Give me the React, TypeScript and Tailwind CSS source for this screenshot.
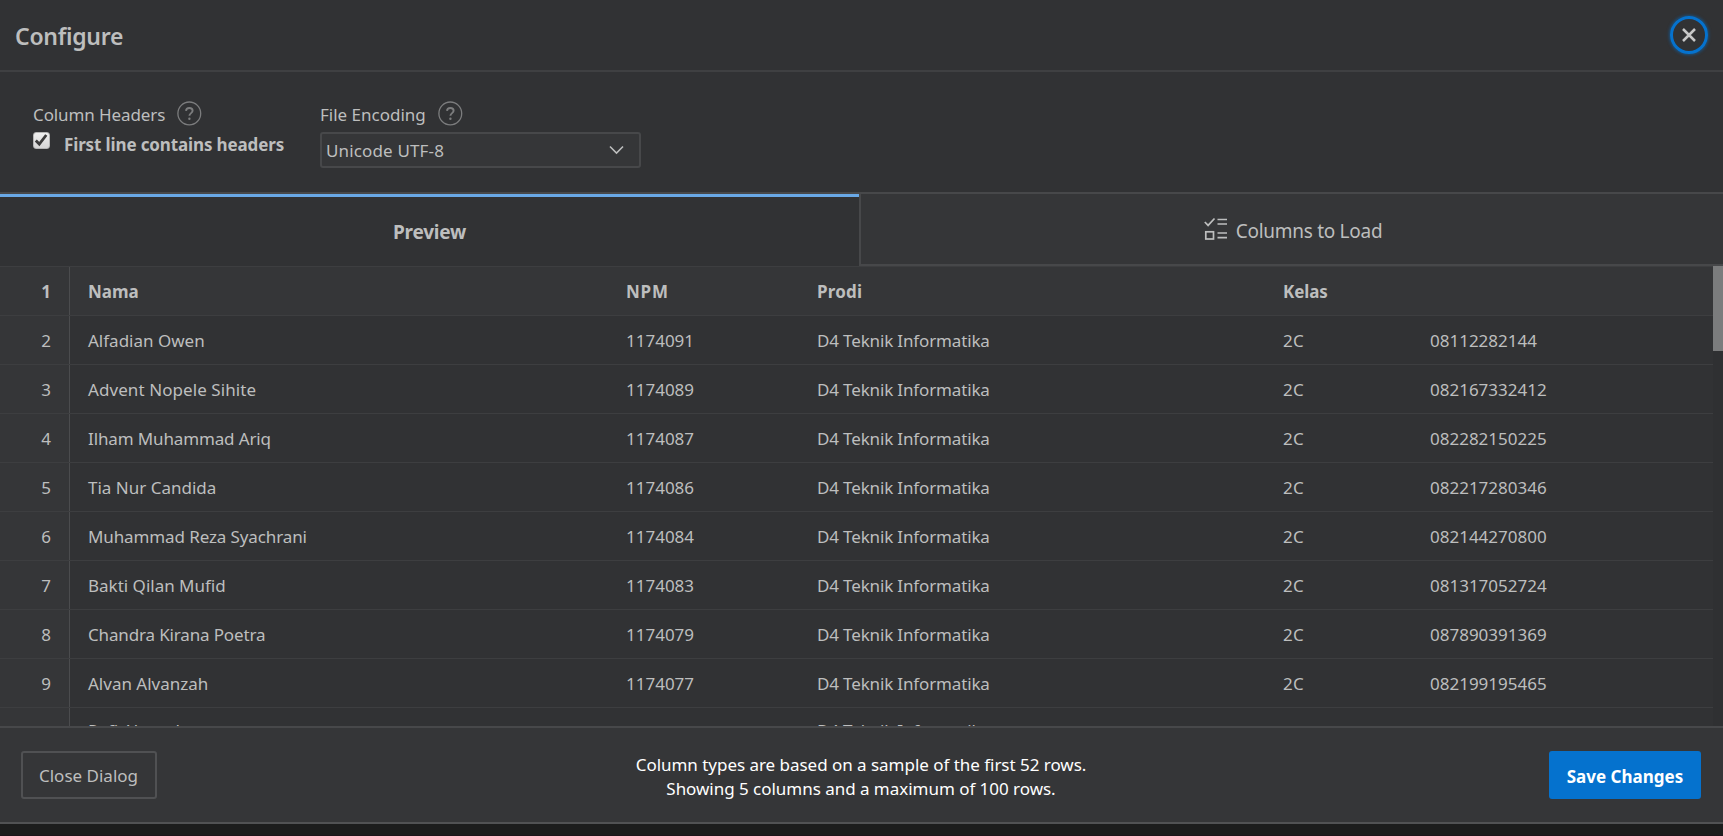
import React from "react";

type Row = { n: number; nama: string; track: string; npm: string; telp: string };

const rows: Row[] = [
  { n: 2, nama: "Alfadian Owen", track: "tracking-normal", npm: "1174091", telp: "08112282144" },
  { n: 3, nama: "Advent Nopele Sihite", track: "tracking-[0.08px]", npm: "1174089", telp: "082167332412" },
  { n: 4, nama: "Ilham Muhammad Ariq", track: "tracking-[-0.13px]", npm: "1174087", telp: "082282150225" },
  { n: 5, nama: "Tia Nur Candida", track: "tracking-normal", npm: "1174086", telp: "082217280346" },
  { n: 6, nama: "Muhammad Reza Syachrani", track: "tracking-[-0.11px]", npm: "1174084", telp: "082144270800" },
  { n: 7, nama: "Bakti Qilan Mufid", track: "tracking-normal", npm: "1174083", telp: "081317052724" },
  { n: 8, nama: "Chandra Kirana Poetra", track: "tracking-[-0.15px]", npm: "1174079", telp: "087890391369" },
  { n: 9, nama: "Alvan Alvanzah", track: "tracking-normal", npm: "1174077", telp: "082199195465" },
];

const grid = "grid h-[49px] shrink-0 grid-cols-[70px_556px_191px_466px_147px_1fr] border-t border-[#3d3e40]";

function Help() {
  return (
    <svg className="size-6 shrink-0 overflow-visible" viewBox="0 0 24 24" fill="none" stroke="#7c7d7e" strokeWidth="1.3">
      <circle cx="12.3" cy="12.4" r="11.4" />
      <path d="M9 9.900C9.100 8 10.400 7 12.300 7s3.300 1.100 3.300 2.800c0 2.300-3.200 2.400-3.200 5" strokeWidth="1.9" />
      <circle cx="12.4" cy="17.800" r="1.2" fill="#7c7d7e" stroke="none" />
    </svg>
  );
}

export default function App() {
  return (
    <div className="flex h-[836px] w-[1723px] flex-col overflow-hidden whitespace-nowrap bg-[#313234] font-['Noto_Sans',sans-serif] text-[17px] leading-6 text-[#bdbebe]">
      <header className="flex h-[72px] shrink-0 items-center justify-between border-b-2 border-[#3f4042] pl-[15px] pr-[15px]">
        <h1 className="pt-px text-[23px] font-semibold leading-8 tracking-[-0.28px]">Configure</h1>
        <button className="flex size-[38px] items-center justify-center rounded-full border-[3px] border-[#0572ce] shadow-[0_0_3px_1px_rgba(5,114,206,0.5)]">
          <svg className="size-4" viewBox="0 0 16 16" stroke="#c8c8c8" strokeWidth="2.5"><path d="M2 2l12 12M14 2L2 14" /></svg>
        </button>
      </header>

      <section className="flex h-[120px] shrink-0 pl-[33px] pt-[29px]">
        <div className="w-[287px]">
          <div className="flex h-6 items-center gap-3"><span className="w-[132px] pt-[4px] tracking-[-0.1px]">Column Headers</span><Help /></div>
          <div className="flex pt-[6px]">
            <span className="mt-[1px] flex size-[17px] items-center justify-center rounded-[3px] border border-[#b5b5b5] bg-linear-to-b from-[#efefef] to-[#d6d6d6]">
              <svg className="size-[15px]" viewBox="0 0 15 15" fill="none" stroke="#3c3c3c" strokeWidth="2.8"><path d="M1.800 7.500l3.500 3.600L12.300 2" /></svg>
            </span>
            <span className="ml-[14px] mt-[2px] font-bold tracking-[-0.13px]">First line contains headers</span>
          </div>
        </div>
        <div>
          <div className="flex h-6 items-center gap-3"><span className="w-[106px] pt-[4px]">File Encoding</span><Help /></div>
          <div className="mt-[7px] flex h-[36px] w-[321px] items-center justify-between rounded-[3px] border-2 border-[#47484a] bg-[#353638] pl-1 pr-[14px]">
            <span className="pt-[2px] tracking-[0.15px]">Unicode UTF-8</span>
            <svg className="h-4 w-[17px]" viewBox="0 0 17 16" fill="none" stroke="#bdbebe" strokeWidth="1.6"><path d="M2 4.500l6.500 6.500L15 4.500" /></svg>
          </div>
        </div>
      </section>

      <nav className="flex h-[74px] shrink-0 border-t-2 border-[#47484a] text-[19px]">
        <div className="flex w-[859px] items-center justify-center border-t-[3px] border-[#69a8e6] font-bold tracking-[-0.2px]"><span>Preview</span></div>
        <div className="flex flex-1 items-center justify-center gap-2 border-b-2 border-l-2 border-[#47484a] bg-[#353638] pl-[2px]">
          <svg className="size-6" viewBox="0 0 24 24" fill="none" stroke="#bdbebe" strokeWidth="1.7">
            <path d="M.8 5l3.300 3.400L10.500 1.500M13.500 2.500H23M13.500 7H23M13.500 16H23M13.500 20.700H23" /><rect x="1.800" y="14.800" width="7.700" height="7.200" />
          </svg>
          <span className="pt-[4px] tracking-[-0.28px]">Columns to Load</span>
        </div>
      </nav>

      <main className="flex h-[460px] shrink-0 overflow-hidden">
        <div className="flex flex-1 flex-col">
          <div className={`${grid} bg-[#353638] font-bold`}>
            <span className="border-r border-[#4b4c4e] pr-[18px] pt-[13px] text-right">1</span>
            <span className="pl-[18px] pt-[13px]">Nama</span>
            <span className="pt-[13px] tracking-[0.8px]">NPM</span>
            <span className="pt-[13px] tracking-[0.2px]">Prodi</span>
            <span className="pt-[13px] tracking-[-0.1px]">Kelas</span>
            <span />
          </div>
          {rows.map((r) => (
            <div key={r.n} className={grid}>
              <span className="border-r border-[#4b4c4e] bg-[#353638] pr-[18px] pt-[13px] text-right">{r.n}</span>
              <span className={`pl-[18px] pt-[13px] ${r.track}`}>{r.nama}</span>
              <span className="pt-[13px]">{r.npm}</span>
              <span className="pt-[13px] tracking-[-0.15px]">D4 Teknik Informatika</span>
              <span className="pt-[13px] tracking-[0.4px]">2C</span>
              <span className="pt-[13px]">{r.telp}</span>
            </div>
          ))}
          <div className={grid}>
            <span className="border-r border-[#4b4c4e] bg-[#353638]" />
            <span className="pl-[18px] pt-[11px]">Rafi Ahmad</span>
            <span />
            <span className="pt-[11px] tracking-[-0.15px]">D4 Teknik Informatika</span>
          </div>
        </div>
        <div className="w-[10px] bg-[#2f3032]"><div className="h-[85px] bg-[#7b7c7d]" /></div>
      </main>

      <footer className="flex h-[98px] shrink-0 items-center justify-between border-y-2 border-[#47484a] border-b-[#515254] bg-[#353638] pl-[21px] pr-[22px]">
        <button className="h-[48px] w-[136px] rounded-[3px] border-2 border-[#505153] pr-px pt-[2px]">Close Dialog</button>
        <p className="pl-[16px] pt-[3px] text-center tracking-[-0.03px] text-white">Column types are based on a sample of the first 52 rows.<br />Showing 5 columns and a maximum of 100 rows.</p>
        <button className="h-[48px] w-[152px] rounded-[3px] bg-[#0572ce] pt-[3px] font-bold text-white">Save Changes</button>
      </footer>
      <div className="flex-1 border-b border-[#1d151b] bg-[#1c1d1d]" />
    </div>
  );
}
